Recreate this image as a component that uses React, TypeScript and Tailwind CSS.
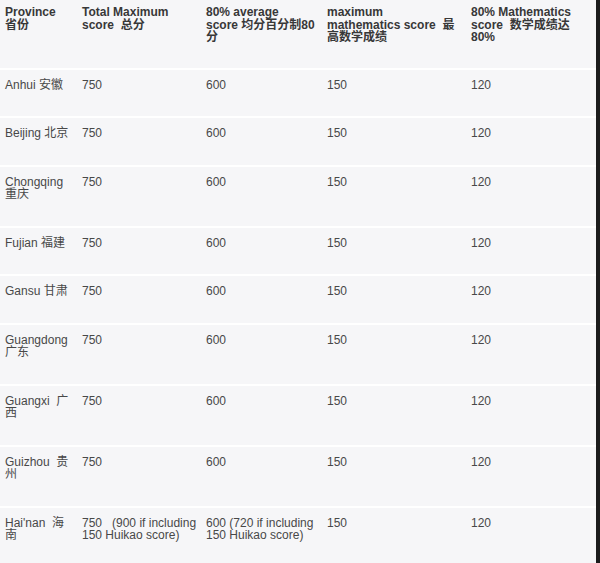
const head = [
  "Province\n省份",
  "Total Maximum\nscore  总分",
  "80% average\nscore 均分百分制80\n分",
  "maximum\nmathematics score  最\n高数学成绩",
  "80% Mathematics\nscore  数学成绩达\n80%",
];

const rows: string[][] = [
  ["Anhui 安徽", "750", "600", "150", "120"],
  ["Beijing 北京", "750", "600", "150", "120"],
  ["Chongqing 重庆", "750", "600", "150", "120"],
  ["Fujian 福建", "750", "600", "150", "120"],
  ["Gansu 甘肃", "750", "600", "150", "120"],
  ["Guangdong 广东", "750", "600", "150", "120"],
  ["Guangxi  广西", "750", "600", "150", "120"],
  ["Guizhou  贵州", "750", "600", "150", "120"],
  ["Hai'nan  海南", "750   (900 if including 150 Huikao score)", "600 (720 if including 150 Huikao score)", "150", "120"],
];

const widths = ["w-[77px]", "w-[124px]", "w-[121px]", "w-[144px]", ""];

export default function App() {
  return (
    <div
      className="flex h-[563px] w-[600px] overflow-hidden bg-[#f6f6f8] text-[12px] leading-[12.5px] text-[#484848]"
      style={{ fontFamily: '"Liberation Sans", "Noto Sans CJK SC", sans-serif' }}
    >
      <div className="flex-1">
        <table className="w-full table-fixed border-collapse">
          <colgroup>
            {widths.map((w, i) => (
              <col key={i} className={w} />
            ))}
          </colgroup>
          <thead>
            <tr className="border-b-2 border-white">
              {head.map((h, i) => (
                <th
                  key={i}
                  className="whitespace-pre-wrap pb-[24px] pl-[5px] pr-[4px] pt-[6px] text-left align-top font-bold text-[#383838]"
                >
                  {h}
                </th>
              ))}
            </tr>
          </thead>
          <tbody>
            {rows.map((r, ri) => (
              <tr key={ri} className="border-b-2 border-white">
                {r.map((c, ci) => (
                  <td
                    key={ci}
                    className={`whitespace-pre-wrap pb-[25px] pl-[5px] pt-[9px] align-top ${ci === 0 ? "pr-[5px]" : "pr-[4px]"}`}
                  >
                    {c}
                  </td>
                ))}
              </tr>
            ))}
          </tbody>
        </table>
      </div>
      <div className="w-[4px] bg-[#1c1c1c]" />
    </div>
  );
}
